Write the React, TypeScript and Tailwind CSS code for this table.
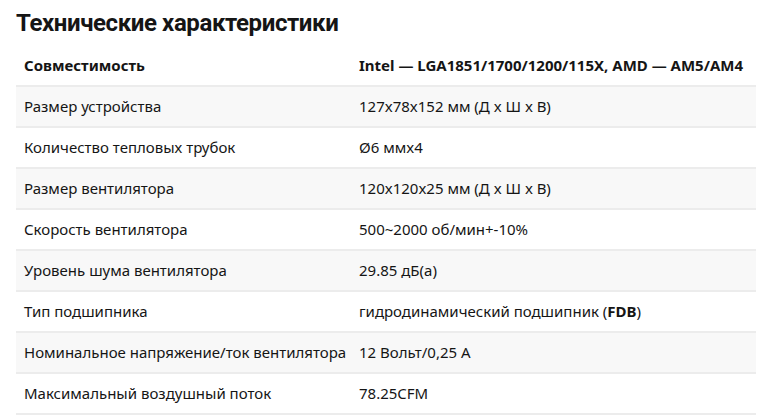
const rows: { label: string; value: React.ReactNode }[] = [
  { label: 'Размер устройства', value: '127x78x152 мм (Д x Ш x В)' },
  { label: 'Количество тепловых трубок', value: 'Ø6 ммx4' },
  { label: 'Размер вентилятора', value: '120x120x25 мм (Д x Ш x В)' },
  { label: 'Скорость вентилятора', value: '500~2000 об/мин+-10%' },
  { label: 'Уровень шума вентилятора', value: '29.85 дБ(а)' },
  {
    label: 'Тип подшипника',
    value: (
      <>
        гидродинамический подшипник (<b className="font-bold">FDB</b>)
      </>
    ),
  },
  { label: 'Номинальное напряжение/ток вентилятора', value: '12 Вольт/0,25 А' },
  { label: 'Максимальный воздушный поток', value: '78.25CFM' },
]

export default function App() {
  return (
    <div className="min-h-[420px] bg-white px-4 pt-[9px] text-[#151515] font-['Noto_Sans',sans-serif]">
      <h2 className="font-['Roboto',sans-serif] text-[24px] leading-[28px] font-bold tracking-[-0.4px]">
        Технические характеристики
      </h2>
      <table className="mt-[8px] w-[740px] border-collapse text-[15px]">
        <tbody>
          <tr className="h-[41px] border-b-2 border-[#ececec]">
            <th className="w-[335px] pl-2 text-left font-bold">Совместимость</th>
            <th className="pl-2 text-left font-bold">Intel — LGA1851/1700/1200/115X, AMD — AM5/AM4</th>
          </tr>
          {rows.map((r, i) => (
            <tr key={r.label} className={`h-[41px] border-b-2 border-[#ececec] ${i % 2 === 0 ? 'bg-[#f8f8f8]' : 'bg-white'}`}>
              <td className="pl-2">{r.label}</td>
              <td className="pl-2">{r.value}</td>
            </tr>
          ))}
        </tbody>
      </table>
    </div>
  )
}
